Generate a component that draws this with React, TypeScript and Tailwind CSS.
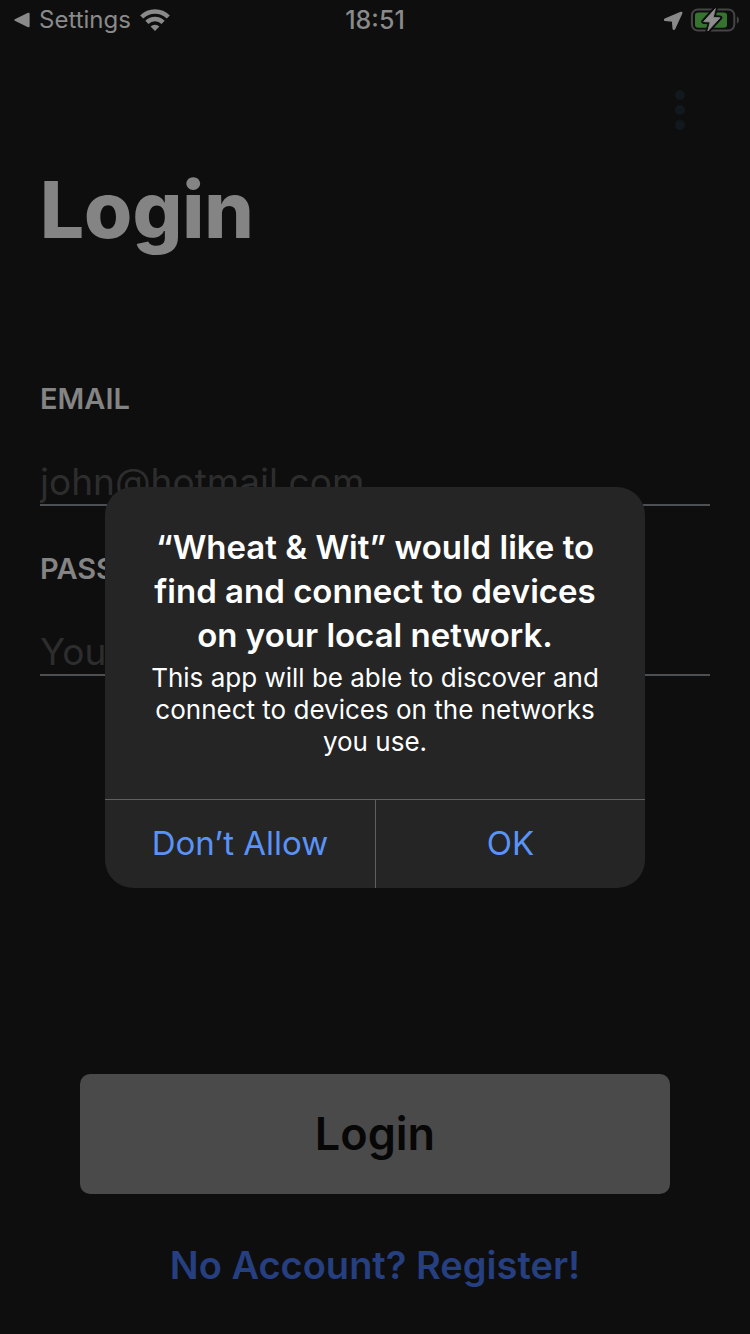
import React from "react";

function WifiIcon() {
  return (
    <svg viewBox="0 0 30 22" className="h-[22px] w-[30px]" fill="none" stroke="#8a8a8a" strokeWidth="4.4" aria-hidden="true">
      <path d="M1.7 8 A18.8 18.8 0 0 1 28.3 8" />
      <path d="M6.9 13.4 A11.4 11.4 0 0 1 23.1 13.4" />
      <path d="M10.6 17.6 A6.4 6.4 0 0 1 19.4 17.6 L15 22 Z" fill="#8a8a8a" stroke="none" />
    </svg>
  );
}

function LocationIcon() {
  return (
    <svg viewBox="0 0 20 20" className="h-5 w-5" aria-hidden="true">
      <path
        d="M17.9 2.4 L2 9.2 Q1.2 9.9 2 10.4 L9.6 11 L10.2 18.8 Q10.7 19.8 11.5 18.9 L18.7 3.2 Q18.8 2.1 17.9 2.4 Z"
        fill="#8a8a8a"
        stroke="#8a8a8a"
        strokeWidth="1.4"
        strokeLinejoin="round"
      />
    </svg>
  );
}

function BatteryIcon() {
  const bolt = "M25.4 0.6 L13.6 13.6 L20.2 14 L17.8 23 L30 9.8 L23.2 9.4 Z";
  return (
    <svg viewBox="0 0 50 24" className="h-6 w-[50px]" aria-hidden="true">
      <rect x="1.9" y="1.4" width="42.4" height="21.2" rx="6" fill="none" stroke="#454545" strokeWidth="2" />
      <path d="M46.9 8.2 Q49 9.2 49 12 Q49 14.8 46.9 15.8 Z" fill="#454545" />
      <rect x="5" y="4.4" width="32" height="15.4" rx="3.2" fill="#35732f" />
      <path d={bolt} fill="#0e0e0e" stroke="#0e0e0e" strokeWidth="4.6" strokeLinejoin="round" />
      <path d={bolt} fill="#8e8e8e" stroke="#8e8e8e" strokeWidth="0.8" strokeLinejoin="round" />
    </svg>
  );
}

function StatusBar() {
  return (
    <header className="grid h-10 grid-cols-[1fr_auto_1fr] items-center px-3 text-[24px] leading-10 text-[#8a8a8a]">
      <a href="#settings" className="flex items-center gap-[9px]">
        <svg viewBox="0 0 18 16" className="h-4 w-[18px]" aria-hidden="true">
          <path d="M2.8 7.2 L16 0.8 Q17.6 0.4 17.6 1.8 V14.2 Q17.6 15.6 16 15.2 L2.8 8.8 Q1.4 8 2.8 7.2 Z" fill="#8a8a8a" />
        </svg>
        <span>Settings</span>
        <WifiIcon />
      </a>
      <time className="text-[25px] font-medium">18:51</time>
      <div className="-mr-[2px] flex items-center justify-end gap-[7px]">
        <LocationIcon />
        <BatteryIcon />
      </div>
    </header>
  );
}

interface FieldProps {
  id: string;
  label: string;
  type: string;
  placeholder: string;
}

function Field({ id, label, type, placeholder }: FieldProps) {
  return (
    <div className="flex flex-col gap-[37px]">
      <label htmlFor={id} className="text-[29px] leading-10 font-semibold text-[#848484]">
        {label}
      </label>
      <input
        id={id}
        type={type}
        placeholder={placeholder}
        className="h-[50px] w-full border-b-2 border-[#4c5052] bg-transparent pt-1 text-[37px] text-[#848484] outline-none placeholder:text-[#2d2d2d]"
      />
    </div>
  );
}

function PermissionDialog() {
  return (
    <div className="absolute inset-0 flex items-center justify-center px-4 pt-[41px]">
      <section
        role="alertdialog"
        aria-labelledby="permission-title"
        aria-describedby="permission-text"
        className="w-full max-w-[540px] overflow-hidden rounded-[28px] bg-[#252525]"
      >
        <div className="px-10 pt-[38px] pb-[41px] text-center text-white">
          <h2 id="permission-title" className="text-[33px] leading-[44px] font-semibold">
            “Wheat &amp; Wit” would like to find and connect to devices on your local network.
          </h2>
          <p id="permission-text" className="mt-[5px] text-[26px] leading-8">
            This app will be able to discover and connect to devices on the networks you use.
          </p>
        </div>
        <div className="grid grid-cols-2 border-t border-[#606060] text-[33px] text-[#5a93f8]">
          <button type="button" className="h-[88px]">Don’t Allow</button>
          <button type="button" className="h-[88px] border-l border-[#606060]">OK</button>
        </div>
      </section>
    </div>
  );
}

export default function App() {
  return (
    <div className="relative flex min-h-screen flex-col bg-[#0e0e0e] font-['Inter',sans-serif]">
      <StatusBar />
      <main className="flex grow flex-col px-10 pt-[50px] pb-[45px]">
        <button type="button" aria-label="More options" className="mr-[25px] flex flex-col gap-[5px] self-end">
          <span className="size-[10px] rounded-full bg-[#11191e]" />
          <span className="size-[10px] rounded-full bg-[#11191e]" />
          <span className="size-[10px] rounded-full bg-[#11191e]" />
        </button>
        <h1 className="mt-8 text-[78px] leading-[96px] font-extrabold text-[#848484]">Login</h1>
        <form className="mt-[121px] flex grow flex-col">
          <div className="flex flex-col gap-[43px]">
            <Field id="email" label="EMAIL" type="email" placeholder="john@hotmail.com" />
            <Field id="password" label="PASSWORD" type="password" placeholder="Your password" />
          </div>
          <button type="submit" className="mx-10 mt-auto h-[120px] rounded-[10px] bg-[#4a4a4a] text-[45px] font-semibold text-[#070707]">
            Login
          </button>
        </form>
        <a href="#register" className="mt-[47px] self-center text-[38px] leading-[48px] font-semibold text-[#263f80]">
          No Account? Register!
        </a>
      </main>
      <PermissionDialog />
    </div>
  );
}
